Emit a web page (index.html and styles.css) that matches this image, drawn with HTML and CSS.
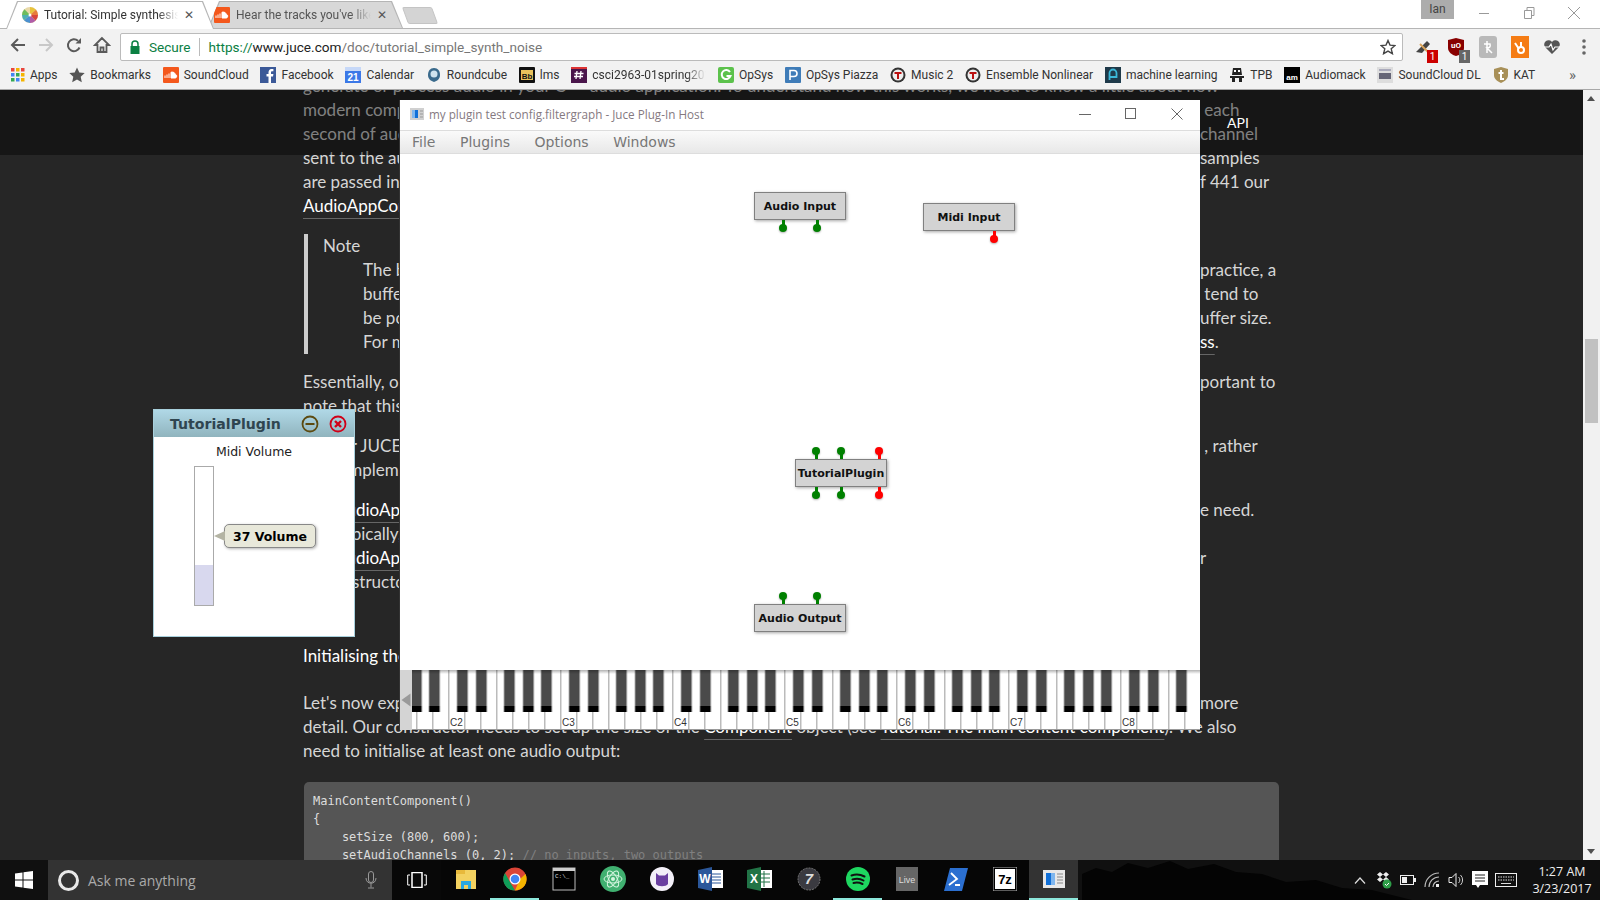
FILE: index.html
```html
<!DOCTYPE html>
<html lang="en">
<head>
    <meta charset="UTF-8">
    <title>Tutorial: Simple synthesis</title>
    <link rel="stylesheet" href="styles.css">
</head>
<body>

    <svg class="defs" width="0" height="0">
        <symbol id="sc" viewBox="0 0 16 16"><rect width="16" height="16" rx="1" fill="#f4581c"/><path d="M2 11V8.500M4 11V7.500M6 11V6.500M8 11V5.200c3-.6 4 1 4.200 2.200 1.800-.2 2.300 3.600-.2 3.600z" stroke="#fff" fill="#fff" stroke-width="1"/></symbol>
        <symbol id="shield" viewBox="0 0 16 16"><circle cx="8" cy="8" r="7.500" fill="#333"/><circle cx="8" cy="8" r="5.500" fill="#eee"/><path d="M4.500 5h7v2h-2.500v5h-2V7H4.500z" fill="#b11"/></symbol>
    </svg>

    <header class="browser">
        <div class="tabstrip">
            <div class="tab tab-active">
                <svg width="16" height="16" viewBox="0 0 16 16"><circle cx="8" cy="8" r="8" fill="#e9d9a8"/><path d="M8 8V0a8 8 0 0 1 6 2.700z" fill="#e8c23c"/><path d="M8 8l6-5.300A8 8 0 0 1 16 8z" fill="#e77c3a"/><path d="M8 8h8a8 8 0 0 1-2.500 5.800z" fill="#d8443c"/><path d="M8 8l5.500 5.800A8 8 0 0 1 8 16z" fill="#b05ca8"/><path d="M8 8v8a8 8 0 0 1-6-2.700z" fill="#4a90d0"/><path d="M8 8l-6 5.300A8 8 0 0 1 0 8z" fill="#4cb0b0"/><path d="M8 8H0a8 8 0 0 1 2.500-5.800z" fill="#6cbc5c"/><circle cx="8" cy="8" r="1.500" fill="#fff"/></svg>
                <span class="tab-title">Tutorial: Simple synthesis</span>
                <span class="tab-x">✕</span>
            </div>
            <div class="tab tab-other">
                <svg width="16" height="16"><use href="#sc"/></svg>
                <span class="tab-title">Hear the tracks you've liked</span>
                <span class="tab-x">✕</span>
            </div>
            <div class="tab-new"></div>
            <div class="profile">Ian</div>
            <div class="win-btns">
                <svg width="16" height="16" viewBox="0 0 16 16"><path d="M3 8.500h10" stroke="#999"/></svg>
                <svg width="16" height="16" viewBox="0 0 16 16"><path d="M3.500 5.500h7v8h-7zM6 5.500v-3h7v8h-2.500" fill="none" stroke="#999"/></svg>
                <svg width="16" height="16" viewBox="0 0 16 16"><path d="M2 2l12 12M14 2L2 14" stroke="#999"/></svg>
            </div>
        </div>

        <div class="toolbar">
            <svg class="nav" width="18" height="18" viewBox="0 0 18 18"><path d="M16 9H3M9 3L3 9l6 6" fill="none" stroke="#5a5a5a" stroke-width="2"/></svg>
            <svg class="nav" width="18" height="18" viewBox="0 0 18 18"><path d="M2 9h13M9 3l6 6-6 6" fill="none" stroke="#c8c8c8" stroke-width="2"/></svg>
            <svg class="nav" width="18" height="18" viewBox="0 0 18 18"><path d="M14.500 11.500A6 6 0 1 1 13 4.800" fill="none" stroke="#5a5a5a" stroke-width="2"/><path d="M10.500 7.500h5.500V2z" fill="#5a5a5a"/></svg>
            <svg class="nav" width="18" height="18" viewBox="0 0 18 18"><path d="M9 2L2 9h2.500v7h9V9H16zM7.500 16v-4.500h3V16" fill="none" stroke="#5a5a5a" stroke-width="1.800"/></svg>
            <div class="omnibox">
                <svg width="12" height="14" viewBox="0 0 12 14"><path d="M3 6V4a3 3 0 0 1 6 0v2" fill="none" stroke="#0b8043" stroke-width="1.500"/><rect x="1.500" y="6" width="9" height="8" fill="#0b8043"/></svg>
                <span class="secure">Secure</span>
                <span class="omni-div"></span>
                <span class="url"><span class="url-scheme">https://</span>www.juce.com<span class="url-path">/doc/tutorial_simple_synth_noise</span></span>
                <svg class="star" width="16" height="16" viewBox="0 0 16 16"><path d="M8 1.500l2 4.600 5 .4-3.800 3.300 1.200 4.900L8 12.100l-4.400 2.600 1.200-4.900L1 6.500l5-.4z" fill="none" stroke="#444" stroke-width="1.400"/></svg>
            </div>
            <div class="extensions">
                <span class="ext"><svg width="20" height="20" viewBox="0 0 20 20"><path d="M2 15L13 4l3 3-8 9z" fill="#444"/><path d="M6 7l8 8" stroke="#d9a35a" stroke-width="2"/></svg><span class="badge badge-red">1</span></span>
                <span class="ext"><svg width="20" height="20" viewBox="0 0 20 20"><path d="M2 3l8-2 8 2v8c0 4-4 7-8 8-4-1-8-4-8-8z" fill="#800"/><text x="10" y="11" class="ublock">uO</text></svg><span class="badge badge-grey">1</span></span>
                <span class="ext"><svg width="18" height="22" viewBox="0 0 18 22"><rect width="18" height="22" rx="3" fill="#b9b9b9"/><path d="M8 5v12M5 8h6c1 3-1 4-3 4l5 5" fill="none" stroke="#fff" stroke-width="1.500"/></svg></span>
                <span class="ext"><svg width="18" height="22" viewBox="0 0 18 22"><rect width="18" height="22" fill="#f57c14"/><circle cx="10" cy="14" r="3" fill="none" stroke="#fff" stroke-width="2"/><path d="M10 11V6M8 13L4 7" stroke="#fff" stroke-width="2"/></svg></span>
                <span class="ext"><svg width="18" height="16" viewBox="0 0 18 16"><path d="M9 15L2 8a4 4 0 0 1 7-5 4 4 0 0 1 7 5z" fill="#555"/><path d="M1 8h5l2-3 2 6 2-3h5" fill="none" stroke="#fff" stroke-width="1.200"/></svg></span>
                <span class="ext"><svg width="4" height="16" viewBox="0 0 4 16"><circle cx="2" cy="2" r="1.800" fill="#666"/><circle cx="2" cy="8" r="1.800" fill="#666"/><circle cx="2" cy="14" r="1.800" fill="#666"/></svg></span>
            </div>
        </div>

        <nav class="bookmarks">
            <a class="bm"><svg width="14" height="14" viewBox="0 0 14 14"><g><rect width="3.500" height="3.500" fill="#e8453c"/><rect x="5" width="3.500" height="3.500" fill="#f4b400"/><rect x="10" width="3.500" height="3.500" fill="#e8453c"/><rect y="5" width="3.500" height="3.500" fill="#4285f4"/><rect x="5" y="5" width="3.500" height="3.500" fill="#34a853"/><rect x="10" y="5" width="3.500" height="3.500" fill="#f4b400"/><rect y="10" width="3.500" height="3.500" fill="#34a853"/><rect x="5" y="10" width="3.500" height="3.500" fill="#4285f4"/><rect x="10" y="10" width="3.500" height="3.500" fill="#f4b400"/></g></svg>Apps</a>
            <a class="bm"><svg width="16" height="16" viewBox="0 0 16 16"><path d="M8 .500l2.300 5 5.400.6-4 3.700 1.100 5.400L8 12.500l-4.800 2.700 1.100-5.400-4-3.700 5.400-.6z" fill="#555"/></svg>Bookmarks</a>
            <a class="bm"><svg width="16" height="16"><use href="#sc"/></svg>SoundCloud</a>
            <a class="bm"><svg width="16" height="16" viewBox="0 0 16 16"><rect width="16" height="16" fill="#3b5998"/><path d="M11 16V9.500h2l.4-2.500H11V5.500c0-.8.3-1.200 1.200-1.200h1.200V2.100C12 2 9 1.500 8.500 5v2H6.500v2.500h2V16z" fill="#fff"/></svg>Facebook</a>
            <a class="bm"><svg width="16" height="16" viewBox="0 0 16 16"><rect width="16" height="16" fill="#3b78e7"/><rect y="0" width="16" height="4" fill="#c6d8f8"/><text x="8" y="14" class="cal">21</text></svg>Calendar</a>
            <a class="bm"><svg width="16" height="16" viewBox="0 0 16 16"><path d="M8 1c4 0 6 3 6 7s-3 6-6 7c-3-1-6-3-6-7s2-7 6-7z" fill="#3a6a8c"/><circle cx="8" cy="7" r="3.500" fill="#cfe3ee"/></svg>Roundcube</a>
            <a class="bm"><svg width="16" height="16" viewBox="0 0 16 16"><rect width="16" height="16" rx="1" fill="#111"/><rect x="2" y="3" width="12" height="10" fill="#e8c25c"/><text x="8" y="11.500" class="bb">Bb</text></svg>lms</a>
            <a class="bm bm-fade"><svg width="16" height="16" viewBox="0 0 16 16"><rect width="16" height="16" fill="#4a154b"/><path d="M6 4L5 12M10 4L9 12M3.500 6.500h9M3 9.500h9" stroke="#fff" stroke-width="1.300"/><rect width="16" height="2" fill="#d33"/></svg>csci2963-01spring2017</a>
            <a class="bm"><svg width="16" height="16" viewBox="0 0 16 16"><rect width="16" height="16" rx="2" fill="#5cc24c"/><path d="M12 5a4.500 4.500 0 1 0 .5 4H8.500" fill="none" stroke="#fff" stroke-width="2"/></svg>OpSys</a>
            <a class="bm"><svg width="16" height="16" viewBox="0 0 16 16"><rect width="16" height="16" rx="1" fill="#3f7cb8"/><path d="M5 13V3.500h4a3 3 0 0 1 0 6H5" fill="none" stroke="#fff" stroke-width="1.600"/></svg>OpSys Piazza</a>
            <a class="bm"><svg width="16" height="16"><use href="#shield"/></svg>Music 2</a>
            <a class="bm"><svg width="16" height="16"><use href="#shield"/></svg>Ensemble Nonlinear</a>
            <a class="bm"><svg width="16" height="16" viewBox="0 0 16 16"><rect width="16" height="16" fill="#1f3a4a"/><path d="M4.500 13V6a3.500 3.500 0 0 1 7 0v4h-7" fill="none" stroke="#3bb8d8" stroke-width="1.800"/></svg>machine learning</a>
            <a class="bm"><svg width="16" height="16" viewBox="0 0 16 16"><path d="M4 1h8l1 7H3zM1 9h14v2H1zM3 11h3v4H3zM10 11h3v4h-3z" fill="#222"/><rect x="5" y="3" width="2" height="2" fill="#fff"/><rect x="9" y="3" width="2" height="2" fill="#fff"/></svg>TPB</a>
            <a class="bm"><svg width="16" height="16" viewBox="0 0 16 16"><rect width="16" height="16" fill="#000"/><text x="8" y="13" class="am">am</text></svg>Audiomack</a>
            <a class="bm"><svg width="16" height="16" viewBox="0 0 16 16"><rect width="16" height="16" fill="#ddd"/><rect x="2" y="6" width="12" height="6" fill="#667"/><rect x="2" y="2" width="12" height="2" fill="#aab"/></svg>SoundCloud DL</a>
            <a class="bm"><svg width="16" height="16" viewBox="0 0 16 16"><path d="M8 0l7 2v6c0 4-3 6-7 8-4-2-7-4-7-8V2z" fill="#a89058"/><path d="M8 3v9h3M5.500 6h5" fill="none" stroke="#fff" stroke-width="2"/></svg>KAT</a>
            <span class="bm-more">»</span>
        </nav>
    </header>

    <main class="page">
        <article class="doc">
            <div class="ln ln-full">generate or process audio in your C++ audio application. To understand how this works, we need to know a little about how</div>
            <div class="ln"><span>modern computers</span><span>&nbsp;each</span></div>
            <div class="ln"><span>second of audio</span><span>channel</span></div>
            <div class="ln"><span>sent to the audio</span><span>samples</span></div>
            <div class="ln"><span>are passed into</span><span>f 441 our</span></div>
            <div class="ln"><a class="ref">AudioAppComponent</a></div>

            <section class="note para">
                <div class="ln">Note</div>
                <div class="ln ln-in"><span>The buffer</span><span>practice, a</span></div>
                <div class="ln ln-in"><span>buffer</span><span>&nbsp;tend to</span></div>
                <div class="ln ln-in"><span>be powers</span><span>uffer size.</span></div>
                <div class="ln ln-in"><span>For more</span><span><a class="ref">ss</a>.</span></div>
            </section>

            <div class="para">
                <div class="ln"><span>Essentially, our</span><span>portant to</span></div>
                <div class="ln">note that this</div>
            </div>

            <div class="para">
                <div class="ln"><span>Former JUCE</span><span>&nbsp;, rather</span></div>
                <div class="ln">must implement</div>
            </div>

            <div class="para">
                <div class="ln"><span>The <a class="ref">AudioAppComponent</a></span><span>e need.</span></div>
                <div class="ln">also typically,</div>
                <div class="ln"><span>The <a class="ref">AudioAppComponent</a></span><span>r</span></div>
                <div class="ln">its constructor</div>
            </div>

            <h3 class="doc-head">Initialising the Audio Application</h3>

            <div class="para-tight">
                <div class="ln"><span>Let's now explore</span><span>more</span></div>
                <div class="ln ln-full">detail. Our constructor needs to set up the size of the <a class="ref">Component</a> object (see <a class="ref">Tutorial: The main content component</a>). We also</div>
                <div class="ln ln-full">need to initialise at least one audio output:</div>
            </div>

            <pre class="code">MainContentComponent()
{
    setSize (800, 600);
    setAudioChannels (0, 2); <span class="comment">// no inputs, two outputs</span></pre>
        </article>

        <div class="doc-topbar"><span class="api">API</span></div>

        <div class="scrollbar">
            <span class="sb-up"></span>
            <span class="sb-thumb"></span>
            <span class="sb-down"></span>
        </div>
    </main>

    <footer class="taskbar">
        <svg class="tree" width="350" height="40" viewBox="0 0 350 40"><path d="M0 40V14l14-6 16 4 16-9 20 5 22-7 18 8 26-5 22 8 26 2 24 8 30-2 26 8 30 2 40 10z" fill="#040404"/></svg>
        <div class="tb-start"><svg width="18" height="18" viewBox="0 0 18 18"><path d="M0 2.500l7.500-1v7H0zM8.500 1.300L18 0v8.500H8.500zM0 9.500h7.500v7l-7.500-1zM8.500 9.500H18V18l-9.500-1.300z" fill="#fff"/></svg></div>
        <div class="tb-search">
            <span class="cortana"></span>
            <span class="tb-search-text">Ask me anything</span>
            <svg width="12" height="18" viewBox="0 0 12 18"><rect x="3.500" y=".5" width="5" height="11" rx="2.500" fill="none" stroke="#999"/><path d="M1 7c0 7 10 7 10 0M6 12.500v4M3 17h6" fill="none" stroke="#999"/></svg>
        </div>
        <div class="tb-view"><svg width="20" height="16" viewBox="0 0 20 16"><rect x="5" y=".5" width="10" height="15" fill="none" stroke="#fff" stroke-width="1.500"/><path d="M3 3H.7v10H3M17 3h2.300v10H17" fill="none" stroke="#fff"/></svg></div>
        <div class="tb-apps">
            <div class="app"><svg width="24" height="24" viewBox="0 0 24 24"><path d="M2 3h20v19H2z" fill="#f3d160"/><rect x="2" y="3" width="9" height="4" fill="#e8b93c"/><path d="M7 22v-8h10v8h-3v-4h-4v4z" fill="#2aa8e0"/></svg></div>
            <div class="app app-on"><svg width="24" height="24" viewBox="0 0 24 24"><circle cx="12" cy="12" r="11.500" fill="#db4437"/><path d="M22.500 7A11.500 11.500 0 0 1 12 23.500L17 12z" fill="#f4b400"/><path d="M12 23.500A11.500 11.500 0 0 1 2 6l5 9z" fill="#0f9d58"/><circle cx="12" cy="12" r="5.500" fill="#fff"/><circle cx="12" cy="12" r="4.300" fill="#4285f4"/></svg></div>
            <div class="app"><svg width="24" height="24" viewBox="0 0 24 24"><rect x="1" y="1" width="22" height="22" fill="#000" stroke="#bbb"/><rect x="1" y="1" width="22" height="3" fill="#ccc"/><text x="3" y="11" class="cmd">C:\_</text></svg></div>
            <div class="app"><svg width="26" height="26" viewBox="0 0 26 26"><circle cx="13" cy="13" r="13" fill="#40b070"/><g fill="none" stroke="#d5f5e0"><ellipse cx="13" cy="13" rx="9" ry="4"/><ellipse cx="13" cy="13" rx="9" ry="4" transform="rotate(60 13 13)"/><ellipse cx="13" cy="13" rx="9" ry="4" transform="rotate(120 13 13)"/></g><circle cx="13" cy="13" r="2" fill="#d5f5e0"/></svg></div>
            <div class="app"><svg width="24" height="24" viewBox="0 0 24 24"><circle cx="12" cy="12" r="12" fill="#f3f0f8"/><path d="M6 17V6l3 2.500h6L18 6v11c-2 3-10 3-12 0z" fill="#6a3fa0"/></svg></div>
            <div class="app"><svg width="26" height="24" viewBox="0 0 26 24"><rect x="9" y="3" width="16" height="18" fill="#fff"/><path d="M11 7h12M11 10h12M11 13h12M11 16h12" stroke="#2b579a"/><path d="M0 3l14-3v24L0 21z" fill="#2b579a"/><text x="7" y="16" class="letter">W</text></svg></div>
            <div class="app"><svg width="26" height="24" viewBox="0 0 26 24"><rect x="9" y="3" width="16" height="18" fill="#fff"/><path d="M11 7h12M11 11h12M11 15h12M17 4v16" stroke="#217346"/><path d="M0 3l14-3v24L0 21z" fill="#217346"/><text x="7" y="16" class="letter">X</text></svg></div>
            <div class="app"><svg width="24" height="24" viewBox="0 0 24 24"><circle cx="12" cy="12" r="11" fill="#3a3a40" stroke="#777" stroke-dasharray="2 1"/><text x="12" y="17" class="seven">7</text></svg></div>
            <div class="app app-on"><svg width="24" height="24" viewBox="0 0 24 24"><circle cx="12" cy="12" r="12" fill="#1ed760"/><path d="M5.500 8.500c4-1.300 9-1 13 1M6.500 12.500c3.500-1 8-.7 11 1M7.500 16c3-.7 6-.5 9 1" fill="none" stroke="#111" stroke-width="2" stroke-linecap="round"/></svg></div>
            <div class="app"><svg width="22" height="24" viewBox="0 0 22 24"><rect width="22" height="24" fill="#666"/><text x="11" y="16" class="live">Live</text></svg></div>
            <div class="app"><svg width="24" height="24" viewBox="0 0 24 24"><path d="M6 1h18l-6 23H0z" fill="#2b6fd0"/><path d="M7 6l6 6-8 6M11 18h5" fill="none" stroke="#fff" stroke-width="1.800"/></svg></div>
            <div class="app"><svg width="24" height="24" viewBox="0 0 24 24"><rect width="24" height="24" fill="#000" stroke="#bbb"/><rect x="2" y="2" width="20" height="20" fill="#fff"/><text x="12" y="17" class="sevenz">7z</text></svg></div>
            <div class="app app-on app-active"><svg width="22" height="18" viewBox="0 0 22 18"><rect width="22" height="18" fill="#e8e8e8"/><rect x="3" y="3" width="5" height="12" fill="#1170d8"/><rect x="8" y="3" width="4" height="12" fill="#7fb6ee"/><path d="M14 4h6M14 7h6M14 10h6M14 13h6" stroke="#888"/></svg></div>
        </div>
        <div class="tray">
            <span class="tray-item"><svg width="12" height="7" viewBox="0 0 12 7"><path d="M1 6.500L6 1l5 5.500" fill="none" stroke="#ddd" stroke-width="1.200"/></svg></span>
            <span class="tray-item"><svg width="16" height="18" viewBox="0 0 16 18"><path d="M4 1l3 2.500L4 6 1 3.500zM10 1l3 2.500L10 6 7 3.500zM4 6l3 2.500L4 11 1 8.500zM10 6l3 2.500L10 11 7 8.500z" fill="#eee"/><circle cx="11" cy="13" r="4.500" fill="#2e9e48"/><path d="M9 13l1.500 1.500L13 12" fill="none" stroke="#fff"/></svg></span>
            <span class="tray-item"><svg width="16" height="10" viewBox="0 0 16 10"><rect x=".5" y=".5" width="13" height="9" fill="none" stroke="#eee"/><rect x="2" y="2" width="5" height="6" fill="#eee"/><rect x="14" y="3" width="2" height="4" fill="#eee"/></svg></span>
            <span class="tray-item"><svg width="16" height="16" viewBox="0 0 16 16"><path d="M1 15a14 14 0 0 1 14-14M5 15A10 10 0 0 1 15 5M9 15a6 6 0 0 1 6-6" fill="none" stroke="#bbb" stroke-width="1.200"/><rect x="12" y="12" width="3" height="3" fill="#eee"/></svg></span>
            <span class="tray-item"><svg width="16" height="16" viewBox="0 0 16 16"><path d="M1 5.500h3l4-4v13l-4-4H1z" fill="none" stroke="#eee"/><path d="M10.500 5a4 4 0 0 1 0 6M12.500 3a7 7 0 0 1 0 10" fill="none" stroke="#ccc"/></svg></span>
            <span class="tray-item"><svg width="16" height="18" viewBox="0 0 16 18"><path d="M0 0h16v14H8l-2 3-2-3H0z" fill="#fff"/><path d="M3 4h10M3 7h10M3 10h10" stroke="#222"/></svg></span>
            <span class="tray-item tray-kbd"><svg width="22" height="14" viewBox="0 0 22 14"><rect x=".5" y=".5" width="21" height="13" fill="none" stroke="#eee"/><path d="M3 4h16M3 7h16" stroke="#ddd" stroke-dasharray="1.500 1"/><path d="M6 10.500h10" stroke="#ddd"/></svg></span>
            <div class="clock"><span>1:27 AM</span><span>3/23/2017</span></div>
        </div>
    </footer>

    <div class="plugin-win">
        <div class="plugin-head">
            <span class="plugin-title">TutorialPlugin</span>
            <svg width="18" height="18" viewBox="0 0 18 18"><circle cx="9" cy="9" r="7.500" fill="none" stroke="#5c4a10" stroke-width="1.800"/><path d="M4.500 9h9" stroke="#5c4a10" stroke-width="2"/></svg>
            <svg width="18" height="18" viewBox="0 0 18 18"><circle cx="9" cy="9" r="7.500" fill="none" stroke="#d00018" stroke-width="1.800"/><path d="M6 6l6 6M12 6l-6 6" stroke="#d00018" stroke-width="2.400"/></svg>
        </div>
        <div class="plugin-body">
            <div class="plugin-label">Midi Volume</div>
            <div class="slider"><div class="slider-fill"></div></div>
            <div class="value-tip">37 Volume</div>
        </div>
    </div>

    <div class="host-win">
        <div class="host-title">
            <svg width="14" height="12" viewBox="0 0 14 12"><rect width="14" height="12" fill="#d0d0d0"/><rect x="2" y="2" width="3" height="8" fill="#7fb6ee"/><rect x="5" y="2" width="3" height="8" fill="#1170d8"/><path d="M10 3h3M10 6h3M10 9h3" stroke="#999"/></svg>
            <span class="host-name">my plugin test config.filtergraph - Juce Plug-In Host</span>
            <div class="host-btns">
                <svg width="12" height="12" viewBox="0 0 12 12"><path d="M0 6.500h12" stroke="#666"/></svg>
                <svg width="12" height="12" viewBox="0 0 12 12"><rect x=".5" y=".5" width="10" height="10" fill="none" stroke="#666"/></svg>
                <svg width="12" height="12" viewBox="0 0 12 12"><path d="M.5.500l11 11M11.500.500l-11 11" stroke="#666"/></svg>
            </div>
        </div>
        <div class="host-menu">
            <span>File</span><span>Plugins</span><span>Options</span><span>Windows</span>
        </div>
        <div class="graph">
            <div class="node node-ai">Audio Input
                <i class="pin pin-b pin-g pos-a"></i><i class="pin pin-b pin-g pos-b"></i>
            </div>
            <div class="node node-mi">Midi Input
                <i class="pin pin-b pin-r pos-c"></i>
            </div>
            <div class="node node-tp">TutorialPlugin
                <i class="pin pin-t pin-g pos-d"></i><i class="pin pin-t pin-g pos-e"></i><i class="pin pin-t pin-r pos-f"></i>
                <i class="pin pin-b pin-g pos-d"></i><i class="pin pin-b pin-g pos-e"></i><i class="pin pin-b pin-r pos-f"></i>
            </div>
            <div class="node node-ao">Audio Output
                <i class="pin pin-t pin-g pos-a"></i><i class="pin pin-t pin-g pos-b"></i>
            </div>
        </div>
        <svg class="keys" width="800" height="60" viewBox="0 0 800 60">
            <defs>
                <pattern id="octave" x="48.330" y="0" width="112" height="60" patternUnits="userSpaceOnUse">
                    <path d="M.5 0v60M16.500 0v60M32.500 0v60M48.500 0v60M64.500 0v60M80.500 0v60M96.500 0v60" stroke="#999"/>
                    <g fill="#4a4a4a">
                        <rect x="8.700" width="10.700" height="36"/><rect x="27.700" width="10.700" height="36"/><rect x="55.700" width="10.700" height="36"/><rect x="74.700" width="10.700" height="36"/><rect x="92.700" width="10.700" height="36"/>
                    </g>
                    <g fill="#000">
                        <rect x="8.700" y="36" width="10.700" height="6"/><rect x="27.700" y="36" width="10.700" height="6"/><rect x="55.700" y="36" width="10.700" height="6"/><rect x="74.700" y="36" width="10.700" height="6"/><rect x="92.700" y="36" width="10.700" height="6"/>
                    </g>
                </pattern>
                <linearGradient id="keyshade" x1="0" y1="0" x2="0" y2="1"><stop offset="0" stop-color="#000" stop-opacity=".3"/><stop offset="1" stop-color="#000" stop-opacity="0"/></linearGradient>
            </defs>
            <rect width="800" height="60" fill="#fff"/>
            <rect width="792" height="60" fill="url(#octave)"/>
            <rect width="800" height="4" fill="url(#keyshade)"/>
            <path d="M0 59.500h800" stroke="#999"/>
            <rect width="12" height="60" fill="#d4d4d4"/>
            <path d="M1.500 30l9-6.500v13z" fill="#999"/>
            <g class="key-labels">
                <text x="50" y="56">C2</text><text x="162" y="56">C3</text><text x="274" y="56">C4</text><text x="386" y="56">C5</text><text x="498" y="56">C6</text><text x="610" y="56">C7</text><text x="722" y="56">C8</text>
            </g>
        </svg>
    </div>

</body>
</html>
```

FILE: styles.css
```css
* {
    box-sizing: border-box;
}

body {
    margin: 0;
    width: 1600px;
    height: 900px;
    overflow: hidden;
    position: relative;
    display: flex;
    flex-direction: column;
    font-family: 'Roboto', sans-serif;
    background-color: #262626;
}

.defs {
    position: absolute;
}

/* browser chrome */

.browser {
    height: 90px;
    flex-shrink: 0;
    background-color: #f2f2f2;
    border-bottom: 1px solid #a8a8a8;
}

.tabstrip {
    height: 29px;
    display: flex;
    align-items: flex-end;
    background-color: #fff;
    border-bottom: 1px solid #b5b5b5;
    padding-left: 6px;
}

.tab {
    height: 28px;
    display: flex;
    align-items: center;
    gap: 6px;
    font-size: 12px;
    position: relative;
    isolation: isolate;
    margin-bottom: -1px;
    background-color: #b5b5b5;
    clip-path: polygon(0 100%, 11px 0, calc(100% - 11px) 0, 100% 100%);
}

.tab::before {
    content: "";
    position: absolute;
    inset: 1px 1px 0 1px;
    z-index: -1;
    clip-path: polygon(0 100%, 11px 0, calc(100% - 11px) 0, 100% 100%);
}

.tab-active {
    width: 208px;
    padding: 0 20px 0 16px;
    color: #333;
    z-index: 1;
}

.tab-active::before {
    background-color: #fff;
}

.tab-other {
    width: 195px;
    margin-left: -6px;
    margin-bottom: 0;
    height: 27px;
    padding: 0 16px 0 6px;
    color: #555;
}

.tab-other::before {
    background-color: #d8d8d8;
}

.tab-title {
    flex: 1;
    overflow: hidden;
    white-space: nowrap;
    -webkit-mask-image: linear-gradient(to right, #000 85%, transparent);
    mask-image: linear-gradient(to right, #000 85%, transparent);
}

.tab-x {
    font-size: 12px;
    color: #555;
}

.tab-new {
    width: 30px;
    height: 17px;
    margin: 0 0 4px 2px;
    background-color: #d4d4d4;
    border: 1px solid #c4c4c4;
    border-radius: 2px;
    transform: skewX(20deg);
}

.profile {
    align-self: flex-start;
    margin-left: auto;
    width: 33px;
    height: 19px;
    background-color: #acacac;
    color: #444;
    font-size: 12px;
    text-align: center;
    line-height: 18px;
}

.win-btns {
    align-self: flex-start;
    width: 146px;
    height: 26px;
    display: flex;
    align-items: center;
    gap: 29px;
    padding-left: 22px;
}

.toolbar {
    height: 32px;
    display: flex;
    align-items: center;
    padding-left: 9px;
}

.nav {
    margin-right: 10px;
}

.toolbar .nav:nth-of-type(4) {
    margin-right: 9px;
}

.omnibox {
    width: 1284px;
    height: 28px;
    margin-top: 3px;
    display: flex;
    align-items: center;
    background-color: #fff;
    border: 1px solid #bbb;
    border-radius: 2px;
    padding-left: 8px;
    font-size: 13.600px;
}

.secure {
    margin-left: 8px;
    color: #0b8043;
}

.omni-div {
    width: 1px;
    height: 18px;
    margin: 0 9px 0 8px;
    background-color: #bbb;
}

.url {
    color: #222;
}

.url-scheme {
    color: #0b8043;
}

.url-path {
    color: #777;
}

.star {
    margin-left: auto;
    margin-right: 6px;
}

.extensions {
    flex: 1;
    display: flex;
    align-items: center;
    padding-left: 5px;
    margin-top: 3px;
}

.ext {
    position: relative;
    width: 32px;
    display: flex;
    justify-content: center;
}

.ublock {
    font-size: 8px;
    fill: #fff;
    text-anchor: middle;
    font-weight: bold;
}

.badge {
    position: absolute;
    right: 2px;
    bottom: -6px;
    width: 11px;
    height: 13px;
    color: #fff;
    font-size: 10px;
    line-height: 13px;
    text-align: center;
}

.badge-red {
    background-color: #c00;
}

.badge-grey {
    background-color: #666;
}

.bookmarks {
    height: 28px;
    display: flex;
    align-items: center;
    padding-left: 11px;
    position: relative;
    font-size: 12px;
    color: #333;
    white-space: nowrap;
}

.bm {
    display: flex;
    align-items: center;
    gap: 5px;
    margin-right: 11.800px;
}

.bm-fade {
    width: 135px;
    overflow: hidden;
    -webkit-mask-image: linear-gradient(to right, #000 85%, transparent);
    mask-image: linear-gradient(to right, #000 85%, transparent);
}

.bm svg {
    flex-shrink: 0;
}

.cal {
    font: bold 10px 'Liberation Sans', sans-serif;
    fill: #fff;
    text-anchor: middle;
}

.bb {
    font: bold 8px 'Liberation Sans', sans-serif;
    fill: #111;
    text-anchor: middle;
}

.am {
    font: bold 8px 'Liberation Sans', sans-serif;
    fill: #fff;
    text-anchor: middle;
}

.bm-more {
    position: absolute;
    left: 1569px;
    font-size: 15px;
    color: #666;
}

/* juce docs page behind the windows */

.page {
    flex: 1;
    display: flex;
    position: relative;
    overflow: hidden;
    background-color: #262626;
    color: #d6d6d6;
    font-family: 'Lato', sans-serif;
    font-size: 17px;
}

.doc {
    flex: 1;
    padding-left: 303px;
    margin-top: -16px;
}

.ln {
    height: 24px;
    line-height: 24px;
    white-space: nowrap;
    display: grid;
    grid-template-columns: 897px auto;
}

.ln-full {
    display: block;
}

.ln-in {
    margin-left: 40px;
    grid-template-columns: 837px auto;
}

.ref {
    color: #fff;
    text-decoration: underline;
    text-decoration-color: #666;
    text-underline-offset: 6px;
}

.para {
    margin-top: 16px;
}

.note {
    margin-left: 1px;
    border-left: 4px solid #ccc;
    padding-left: 15px;
}

.note .ln:first-child {
    display: block;
}

.doc-head {
    margin: 50px 0 23px;
    height: 24px;
    line-height: 24px;
    font-size: 17px;
    font-weight: 400;
    color: #fff;
}

.code {
    margin: 19px 0 0 1px;
    width: 975px;
    height: 100px;
    padding: 10px 9px;
    background-color: #555;
    border-radius: 5px;
    color: #ddd;
    font-family: 'DejaVu Sans Mono', monospace;
    font-size: 12px;
    line-height: 18px;
}

.comment {
    color: #808080;
}

.doc-topbar {
    position: absolute;
    left: 0;
    top: 0;
    width: 1583px;
    height: 65px;
    background-color: rgba(0, 0, 0, 0.4);
}

.api {
    position: absolute;
    left: 1227px;
    top: 24px;
    color: #fff;
    font-size: 14px;
}

.scrollbar {
    width: 17px;
    flex-shrink: 0;
    position: relative;
    background-color: #f1f1f1;
}

.sb-up, .sb-down {
    position: absolute;
    left: 4px;
    border-left: 4px solid transparent;
    border-right: 4px solid transparent;
}

.sb-up {
    top: 6px;
    border-bottom: 5px solid #505050;
}

.sb-down {
    bottom: 6px;
    border-top: 5px solid #505050;
}

.sb-thumb {
    position: absolute;
    left: 2px;
    right: 2px;
    top: 249px;
    height: 84px;
    background-color: #c1c1c1;
}

/* windows taskbar */

.taskbar {
    height: 40px;
    flex-shrink: 0;
    position: relative;
    display: flex;
    align-items: stretch;
    background-color: #101010;
    color: #eee;
}

.tree {
    position: absolute;
    left: 1082px;
    bottom: 0;
}

.tb-start {
    width: 48px;
    display: flex;
    align-items: center;
    justify-content: center;
}

.tb-search {
    width: 344px;
    display: flex;
    align-items: center;
    background-color: #333;
    padding: 0 15px 0 10px;
}

.cortana {
    width: 21px;
    height: 21px;
    border: 3px solid #e8e8e8;
    border-radius: 50%;
}

.tb-search-text {
    flex: 1;
    margin-left: 9px;
    font-family: 'Open Sans', sans-serif;
    font-size: 14px;
    color: #aaa;
}

.tb-view {
    width: 49px;
    display: flex;
    align-items: center;
    justify-content: center;
    background-color: #080808;
}

.tb-apps {
    display: flex;
    background-color: #060606;
    position: relative;
}

.app {
    width: 49px;
    display: flex;
    align-items: center;
    justify-content: center;
    border-bottom: 2px solid transparent;
}

.app-on {
    border-bottom-color: #8de8dc;
}

.app-active {
    background-color: #333;
}

.cmd {
    font: 6px 'Liberation Mono', monospace;
    fill: #ddd;
}

.letter {
    font: bold 12px 'Liberation Sans', sans-serif;
    fill: #fff;
    text-anchor: middle;
}

.seven {
    font: italic bold 15px 'Liberation Sans', sans-serif;
    fill: #ddd;
    text-anchor: middle;
}

.live {
    font: 9px 'Liberation Sans', sans-serif;
    fill: #ddd;
    text-anchor: middle;
}

.sevenz {
    font: bold 13px 'Liberation Sans', sans-serif;
    fill: #000;
    text-anchor: middle;
}

.tray {
    margin-left: auto;
    display: flex;
    align-items: center;
    position: relative;
}

.tray-item {
    width: 24px;
    display: flex;
    justify-content: center;
}

.tray-kbd {
    margin-left: 2px;
}

.clock {
    width: 76px;
    margin-left: 6px;
    display: flex;
    flex-direction: column;
    align-items: center;
    font-family: 'Open Sans', sans-serif;
    font-size: 12.500px;
    line-height: 17px;
}

/* plugin window */

.plugin-win {
    position: absolute;
    left: 153px;
    top: 409px;
    width: 202px;
    height: 228px;
    background-color: #fff;
    border: 1px solid #a8d0dc;
    font-family: 'DejaVu Sans', sans-serif;
}

.plugin-head {
    height: 27px;
    display: flex;
    align-items: center;
    gap: 10px;
    padding: 0 7px 0 16px;
    background: linear-gradient(#b0d8e6, #90b4be);
}

.plugin-title {
    flex: 1;
    font-size: 14.100px;
    font-weight: bold;
    color: #2f4550;
}

.plugin-body {
    position: relative;
    flex: 1;
}

.plugin-label {
    padding-top: 7px;
    text-align: center;
    font-size: 12.500px;
    line-height: 16px;
    color: #222;
}

.slider {
    position: absolute;
    left: 40px;
    top: 29px;
    width: 20px;
    height: 140px;
    background-color: #fff;
    border: 1px solid #aaa;
    display: flex;
    align-items: flex-end;
}

.slider-fill {
    width: 100%;
    height: 40px;
    background-color: #d8d8ee;
}

.value-tip {
    position: absolute;
    left: 70px;
    top: 87px;
    width: 92px;
    height: 24px;
    line-height: 24px;
    text-align: center;
    font-size: 12.500px;
    font-weight: bold;
    color: #000;
    background-color: #e8e8da;
    border: 1px solid #888;
    border-radius: 5px;
    box-shadow: 1px 1px 3px rgba(0, 0, 0, 0.3);
}

.value-tip::before {
    content: "";
    position: absolute;
    left: -11px;
    top: 6px;
    border-top: 5px solid transparent;
    border-bottom: 5px solid transparent;
    border-right: 11px solid #b4b4a4;
}

/* plugin host window */

.host-win {
    position: absolute;
    left: 400px;
    top: 100px;
    width: 800px;
    height: 630px;
    display: flex;
    flex-direction: column;
    background-color: #fff;
    box-shadow: -1px 0 0 #333;
}

.host-title {
    height: 31px;
    display: flex;
    align-items: center;
    padding: 0 0 2px 10px;
    border-bottom: 1px solid #ddd;
}

.host-name {
    flex: 1;
    margin-left: 5px;
    font-family: 'Open Sans', sans-serif;
    font-size: 11.700px;
    color: #85797f;
}

.host-btns {
    display: flex;
    gap: 34px;
    padding-right: 17px;
}

.host-menu {
    height: 23px;
    display: flex;
    gap: 24.500px;
    align-items: center;
    padding-left: 12px;
    background: linear-gradient(#fafafa, #e8e8e8);
    border-bottom: 1px solid #ddd;
    font-family: 'DejaVu Sans', sans-serif;
    font-size: 14px;
    color: #777;
}

.graph {
    flex: 1;
    position: relative;
}

.keys {
    display: block;
    flex-shrink: 0;
}

.key-labels {
    font: 10px 'Liberation Sans', sans-serif;
    fill: #333;
}

.node {
    position: absolute;
    width: 92px;
    height: 28px;
    background-color: #d3d3d3;
    border: 1px solid #808080;
    box-shadow: 1px 1px 3px rgba(0, 0, 0, 0.35);
    font-family: 'DejaVu Sans', sans-serif;
    font-size: 11px;
    font-weight: bold;
    line-height: 27px;
    text-align: center;
    color: #111;
    white-space: nowrap;
}

.node-ai { left: 354px; top: 38px; }
.node-mi { left: 523px; top: 49px; }
.node-tp { left: 395px; top: 305px; }
.node-ao { left: 354px; top: 450px; }

.pin {
    position: absolute;
    width: 8px;
    height: 8px;
    border-radius: 50%;
    box-shadow: 0 1px 2px rgba(0, 0, 0, 0.3);
}

.pin::before {
    content: "";
    position: absolute;
    left: 2.500px;
    width: 3px;
    height: 6px;
    background-color: inherit;
}

.pin-g { background-color: #008000; }
.pin-r { background-color: #f00; }

.pin-b { bottom: -13px; }
.pin-b::before { top: -4px; }
.pin-t { top: -13px; }
.pin-t::before { bottom: -4px; }

.pos-a { left: 24px; }
.pos-b { left: 58px; }
.pos-c { left: 66px; }
.pos-d { left: 16px; }
.pos-e { left: 41px; }
.pos-f { left: 79px; }
```
